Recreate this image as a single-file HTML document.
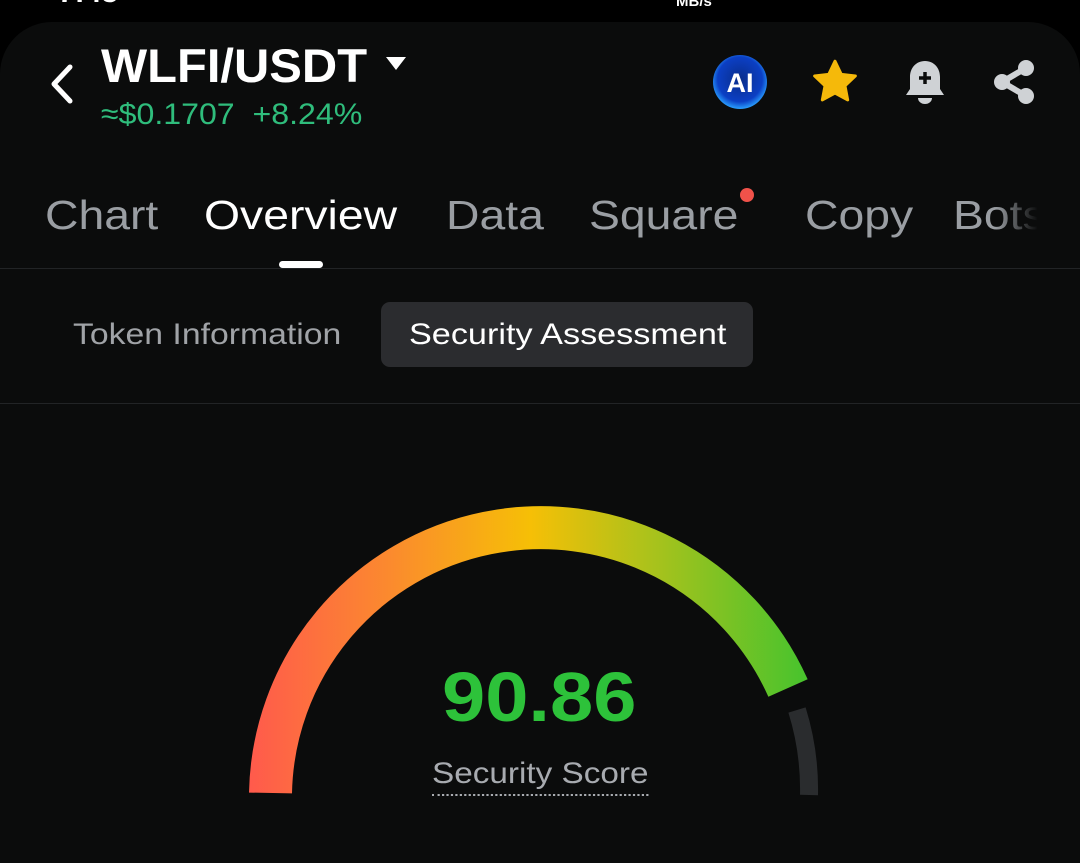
<!DOCTYPE html>
<html><head><meta charset="utf-8"><style>
*{margin:0;padding:0;box-sizing:border-box}
html,body{width:1080px;height:863px;overflow:hidden}
body{background:#000;position:relative;font-family:"Liberation Sans",sans-serif}
.panel{position:absolute;left:0;top:22px;width:1080px;height:841px;background:#0b0c0c;border-radius:52px 52px 0 0}
.t{position:absolute;white-space:nowrap;line-height:1;transform-origin:left top}
.tab{font-size:41px;color:#9a9ea3;top:195px;transform:scaleX(1.13)}
</style></head><body>
<div class="t" style="left:58px;top:-22px;font-size:30px;color:#fff;font-weight:bold">7:43</div>
<div class="t" style="left:676px;top:-6px;font-size:15px;color:#fff;font-weight:bold">MB/s</div>
<div class="panel"></div>
<svg style="position:absolute;left:48px;top:64px" width="26" height="40" viewBox="0 0 26 40"><path d="M22 3 L6 20 L22 37" fill="none" stroke="#fff" stroke-width="5" stroke-linecap="round" stroke-linejoin="round"/></svg>
<div class="t" style="left:101px;top:42px;font-size:47px;font-weight:bold;color:#fff;transform:scaleX(1.04)">WLFI/USDT</div>
<svg style="position:absolute;left:385px;top:56px" width="22" height="16"><path d="M1 1 L21 1 L11 14 Z" fill="#fff"/></svg>
<div class="t" style="left:101px;top:100px;font-size:30px;color:#2fbd7c;transform:scaleX(1.07)">≈$0.1707&nbsp; +8.24%</div>
<svg style="position:absolute;left:708px;top:50px" width="64" height="64" viewBox="0 0 64 64">
<defs><radialGradient id="ag" cx="50%" cy="45%" r="55%"><stop offset="0" stop-color="#0a2d8a"/><stop offset=".75" stop-color="#0b3fc4"/><stop offset="1" stop-color="#2aa0ff"/></radialGradient></defs>
<circle cx="32" cy="32" r="27" fill="url(#ag)"/>
<text x="32" y="42" font-family="Liberation Sans" font-weight="bold" font-size="27" fill="#fff" text-anchor="middle">AI</text></svg>
<svg style="position:absolute;left:810px;top:58px" width="50" height="48" viewBox="0 0 24 23"><path d="M12 1.5l3 6.3 6.8.8-5 4.7 1.3 6.8L12 16.8l-6.1 3.3 1.3-6.8-5-4.7 6.8-.8z" fill="#f5b90a" stroke="#f5b90a" stroke-width="1.4" stroke-linejoin="round"/></svg>
<svg style="position:absolute;left:903px;top:58px" width="44" height="48" viewBox="0 0 44 48">
<path d="M22 3c-9 0-15 7-15 16v12l-4 6h38l-4-6V19C37 10 31 3 22 3z" fill="#cfd2d5"/>
<path d="M15 40a7 6 0 0 0 14 0z" fill="#cfd2d5"/>
<path d="M22 14v12M16 20h12" stroke="#0b0c0c" stroke-width="3.5"/></svg>
<svg style="position:absolute;left:990px;top:57px" width="48" height="50" viewBox="0 0 48 50">
<path d="M36 11 L12 25 L36 39" fill="none" stroke="#cfd2d5" stroke-width="6"/>
<circle cx="36" cy="11" r="8" fill="#cfd2d5"/><circle cx="12" cy="25" r="8" fill="#cfd2d5"/><circle cx="36" cy="39" r="8" fill="#cfd2d5"/></svg>
<div class="t tab" style="left:45px">Chart</div>
<div class="t tab" style="left:204px;color:#fff">Overview</div>
<div class="t tab" style="left:446px">Data</div>
<div class="t tab" style="left:589px">Square</div>
<div style="position:absolute;left:740px;top:188px;width:14px;height:14px;border-radius:50%;background:#f0524a"></div>
<div class="t tab" style="left:805px">Copy</div>
<div class="t tab" style="left:953px;-webkit-mask-image:linear-gradient(90deg,#000 50%,transparent 100%);mask-image:linear-gradient(90deg,#000 50%,transparent 100%);width:75px;overflow:hidden">Bots</div>
<div style="position:absolute;left:279px;top:261px;width:44px;height:7px;border-radius:4px;background:#fff"></div>
<div style="position:absolute;left:0;top:268px;width:1080px;height:1px;background:#222426"></div>
<div class="t" style="left:73px;top:320px;font-size:30px;color:#a0a3a7;transform:scaleX(1.125)">Token Information</div>
<div style="position:absolute;left:381px;top:302px;width:372px;height:65px;border-radius:9px;background:#2b2c2f"></div>
<div class="t" style="left:409px;top:320px;font-size:30px;color:#fff;transform:scaleX(1.14)">Security Assessment</div>
<div style="position:absolute;left:0;top:403px;width:1080px;height:1px;background:#222426"></div>
<svg style="position:absolute;left:0;top:0" width="1080" height="863">
<defs><linearGradient id="g" x1="249" y1="0" x2="812" y2="0" gradientUnits="userSpaceOnUse">
<stop offset="0" stop-color="#ff5a4c"/><stop offset=".25" stop-color="#fb8a2e"/><stop offset=".5" stop-color="#f6bf06"/><stop offset=".72" stop-color="#a8c21c"/><stop offset="1" stop-color="#44c32e"/></linearGradient></defs>
<path d="M270.5 793 A270.5 270.5 0 0 1 788 688" fill="none" stroke="url(#g)" stroke-width="43"/>
<path d="M797 710 A266 266 0 0 1 809 795" fill="none" stroke="#2a2c2e" stroke-width="18"/>
</svg>
<div class="t" style="left:442px;top:662px;font-size:70px;font-weight:bold;color:#2dc23a;transform:scaleX(1.11)">90.86</div>
<div class="t" style="left:432px;top:759px;font-size:30px;color:#a8abb0;transform:scaleX(1.11)"><span style="border-bottom:2px dotted #a8abb0;padding-bottom:4px">Security Score</span></div>
</body></html>
